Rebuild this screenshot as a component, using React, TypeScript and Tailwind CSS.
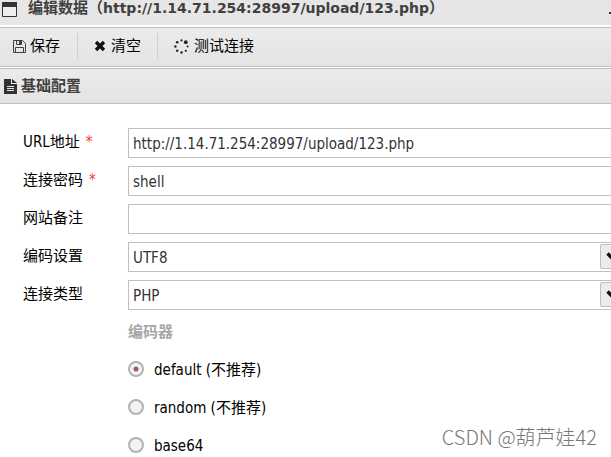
import { useState } from "react"
import type { ReactNode } from "react"

const encoders = [
  { value: "default", label: "default (不推荐)" },
  { value: "random", label: "random (不推荐)" },
  { value: "base64", label: "base64" },
]

const fieldClass =
  "block h-[30px] w-full appearance-none rounded-none border border-[#bfbfbf] bg-white px-1 pt-[2px] text-[15px] text-[#333] outline-none"

function WindowIcon() {
  return (
    <svg width="15" height="15" viewBox="0 0 15 15" aria-hidden="true">
      <path d="M0.5 0.5h14v14h-14z" fill="#eee" stroke="#333" />
      <path d="M0 0h15v5H0z" fill="#333" />
    </svg>
  )
}

function SaveIcon() {
  return (
    <svg width="13" height="13" viewBox="0 0 13 13" fill="none" stroke="#404040" aria-hidden="true">
      <path d="M0.5 0.5h9l3 3v9h-12z" />
      <path d="M3.5 0.5v4h5v-4M2.5 12.5v-5h8v5" />
      <path d="M6 1h2v3H6z" fill="#404040" stroke="none" />
    </svg>
  )
}

function ClearIcon() {
  return (
    <svg width="12" height="12" viewBox="0 0 12 12" aria-hidden="true">
      <path d="M2 2l8 8M10 2l-8 8" stroke="#111" strokeWidth="3.4" />
    </svg>
  )
}

function SpinnerIcon() {
  return (
    <svg width="15" height="15" viewBox="0 0 15 15" fill="#222" aria-hidden="true">
      <circle cx="7.5" cy="1.4" r="1.1" />
      <circle cx="11.8" cy="3.2" r="1.9" />
      <circle cx="13.6" cy="7.5" r="1" />
      <circle cx="11.8" cy="11.8" r="1.1" />
      <circle cx="7.5" cy="13.5" r="1.2" />
      <circle cx="3.2" cy="11.8" r="1.2" />
      <circle cx="1.4" cy="7.5" r="1.2" />
      <circle cx="3.2" cy="3.2" r="1.3" />
    </svg>
  )
}

function FileIcon() {
  return (
    <svg width="13" height="15" viewBox="0 0 13 15" aria-hidden="true">
      <path d="M0 0h7v5h6v10H0zM8 0l5 4H8z" fill="#333" />
      <path d="M3 7.5h7M3 9.5h7M3 11.5h7" stroke="#e6e6e6" />
    </svg>
  )
}

interface FieldProps {
  id: string
  label: string
  required?: boolean
  children: ReactNode
}

function Field({ id, label, required, children }: FieldProps) {
  return (
    <div className="flex h-[38px] items-start">
      <label htmlFor={id} className="w-[105px] shrink-0 pt-1 leading-5">
        {label}
        {required && <span className="ml-[6px] text-[#f33]">*</span>}
      </label>
      <div className="min-w-0 flex-1">{children}</div>
    </div>
  )
}

interface SelectProps {
  id: string
  options: string[]
}

function Select({ id, options }: SelectProps) {
  return (
    <div className="relative">
      <select id={id} className={fieldClass}>
        {options.map((option) => (
          <option key={option}>{option}</option>
        ))}
      </select>
      <span className="pointer-events-none absolute top-[2px] right-[2px] flex h-[25px] w-[25px] items-center justify-center rounded-xs border border-[#bfbfbf] bg-[#ebebeb]">
        <svg width="13" height="9" viewBox="0 0 13 9" fill="none" aria-hidden="true">
          <path d="M1.5 1.5l5 5 5-5" stroke="#111" strokeWidth="3.4" />
        </svg>
      </span>
    </div>
  )
}

export default function App() {
  const [encoder, setEncoder] = useState("default")

  return (
    <div className="relative h-screen overflow-hidden bg-white font-['DejaVu_Sans_Condensed','Noto_Sans_CJK_SC',sans-serif] text-[15px] text-black">
      <header className="flex h-[25px] items-start bg-[#e6e6e6] pl-[2px] text-[#404040]">
        <span className="mt-[2px]">
          <WindowIcon />
        </span>
        <h1 className="ml-[11px] text-[15px] leading-4 font-bold whitespace-nowrap">
          编辑数据（
          <span className="font-['DejaVu_Sans',sans-serif] text-sm leading-4">http://1.14.71.254:28997/upload/123.php</span>
          ）
        </h1>
        <button type="button" aria-label="Minimize" className="mt-3 ml-auto h-[2px] w-[2px] bg-[#333]" />
      </header>

      <div className="mt-[2px] flex h-10 items-center border-y border-[#bfbfbf] bg-linear-to-b from-[#ebebeb] to-[#e4e4e4] pb-[2px]">
        <button type="button" className="flex h-[26px] w-[78px] items-center gap-1 border-r border-[#c8d3da] pl-[13px]">
          <SaveIcon />
          保存
        </button>
        <button type="button" className="flex h-[26px] w-20 items-center gap-[5px] border-r border-[#c8d3da] pl-4">
          <ClearIcon />
          清空
        </button>
        <button type="button" className="flex h-[26px] items-center gap-[5px] pl-4">
          <SpinnerIcon />
          测试连接
        </button>
      </div>

      <h2 className="mt-px flex h-9 items-center gap-1 border-y border-[#bfbfbf] bg-linear-to-b from-[#ebebeb] to-[#e4e4e4] pl-1 text-[15px] font-bold text-[#404040]">
        <FileIcon />
        基础配置
      </h2>

      <form className="-mr-4 pt-6 pl-[23px]">
        <Field id="url" label="URL地址" required>
          <input id="url" type="text" defaultValue="http://1.14.71.254:28997/upload/123.php" className={fieldClass} />
        </Field>
        <Field id="password" label="连接密码" required>
          <input id="password" type="text" defaultValue="shell" className={fieldClass} />
        </Field>
        <Field id="note" label="网站备注">
          <input id="note" type="text" className={fieldClass} />
        </Field>
        <Field id="encoding" label="编码设置">
          <Select id="encoding" options={["UTF8", "GBK"]} />
        </Field>
        <Field id="type" label="连接类型">
          <Select id="type" options={["PHP", "ASP"]} />
        </Field>

        <fieldset className="pl-[105px]">
          <legend className="h-8 pt-1 leading-5 font-bold text-[#a6a6a6]">编码器</legend>
          {encoders.map((item) => (
            <label key={item.value} className="flex h-[38px] items-center gap-[10px]">
              <input
                type="radio"
                name="encoder"
                value={item.value}
                checked={encoder === item.value}
                onChange={() => setEncoder(item.value)}
                className="h-4 w-4 appearance-none rounded-full border-2 border-[#b5b0b4] bg-[#f3f3f3] checked:bg-[radial-gradient(circle,#965f60_2px,#f3f3f3_3px)]"
              />
              <span className="pt-[2px]">{item.label}</span>
            </label>
          ))}
        </fieldset>
      </form>

      <div className="absolute right-[14px] bottom-[6px] font-['Noto_Sans_CJK_SC',sans-serif] text-xl font-light text-[#777]">
        CSDN @葫芦娃42
      </div>
    </div>
  )
}
